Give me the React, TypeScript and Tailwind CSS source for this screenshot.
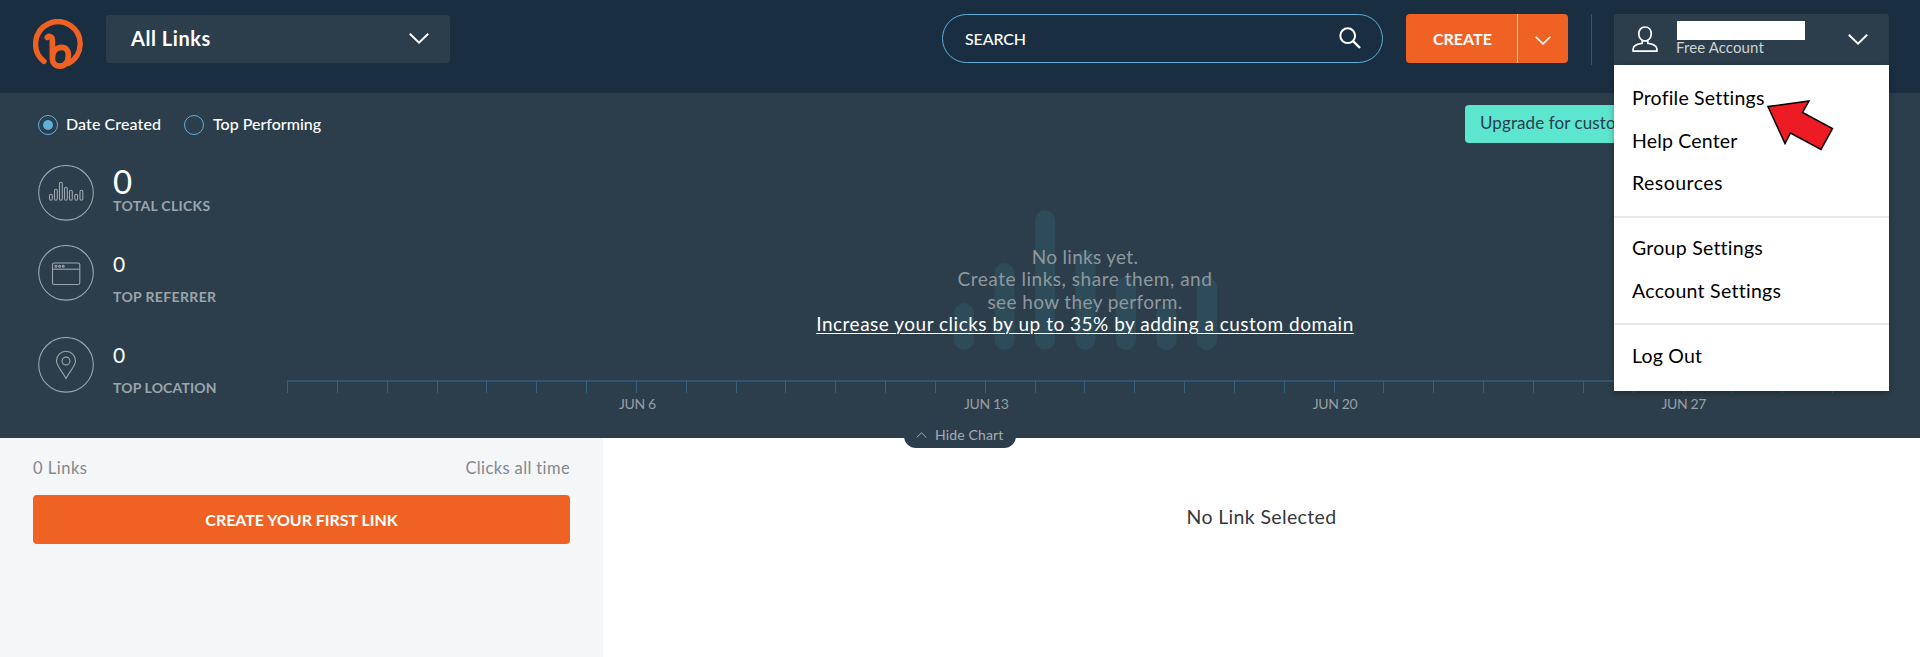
const tickSpacing = 49.84;
const ticks = Array.from({ length: 32 }, (_, i) => Math.round(i * tickSpacing) + 0.5);
const dates = ["JUN 6", "JUN 13", "JUN 20", "JUN 27"];
const bars = [
  { x: 667, top: 138 },
  { x: 707.5, top: 98 },
  { x: 748, top: 45 },
  { x: 788.5, top: 85 },
  { x: 829, top: 112 },
  { x: 869.5, top: 138 },
  { x: 910, top: 112 },
];
const glyphBars = [
  { x: 11.5, h: 6 },
  { x: 16.5, h: 11 },
  { x: 21.5, h: 18 },
  { x: 26.5, h: 13 },
  { x: 31.5, h: 10 },
  { x: 36.8, h: 6 },
  { x: 42, h: 10 },
];

function Logo() {
  return (
    <svg className="mt-[19px] h-[50px] w-[50px]" viewBox="0 0 50 50" fill="none" stroke="#ee6123" strokeLinecap="round">
      <path d="M11 42.4A22.3 22.3 0 1 1 47.2 25.5C47 33 43 40.5 35 44.5" strokeWidth="5.4" />
      <path d="M14.3 18.3C15.6 16.8 19.4 17 19.4 21.5V39.5C19.4 44 22.3 47.1 26.8 47.1C32.6 47.1 35.4 42 35.4 36C35.4 31 32.8 28.3 28.8 28.3C23.5 28.3 19.6 32 19.4 38.5" strokeWidth="5.7" />
    </svg>
  );
}

function Chevron({ className }: { className: string }) {
  return (
    <svg className={className} viewBox="0 0 20 11" fill="none" stroke="currentColor" strokeWidth="2">
      <path d="M0.8 0.8L10 9.6L19.2 0.8" />
    </svg>
  );
}

function Ring({ children }: { children: React.ReactNode }) {
  return (
    <svg className="h-14 w-14 shrink-0" viewBox="0 0 56 56" fill="none" stroke="#9ca5ab" strokeWidth="1.1">
      <circle cx="28" cy="27.8" r="27.3" />
      {children}
    </svg>
  );
}

function Header() {
  return (
    <header className="flex h-[93px] items-start bg-[#1a2e41] pl-[33px]">
      <Logo />
      <div className="mt-[15px] ml-[23px] flex h-12 w-[344px] items-center justify-between rounded-[3px] bg-[#2c3e4b] pr-[21px] pb-[2px] pl-[25px] text-white">
        <span className="text-[20px] font-bold tracking-[0.55px]">All Links</span>
        <Chevron className="h-[11px] w-5" />
      </div>
      <div className="mt-[14px] ml-[492px] flex h-[49px] w-[441px] items-center justify-between rounded-full border border-[#5eb0dc] pr-[21px] pl-[22px] text-white">
        <span className="text-base font-medium tracking-[-0.12px]">SEARCH</span>
        <svg className="-mt-[2px] h-[22px] w-[22px]" viewBox="0 0 22 22" fill="none" stroke="currentColor">
          <circle cx="8.7" cy="8.7" r="7.4" strokeWidth="2" />
          <path d="M14 14L21 21" strokeWidth="2.4" />
        </svg>
      </div>
      <div className="mt-[14px] ml-[23px] flex h-[49px] w-[162px] overflow-hidden rounded bg-[#f06223] text-white">
        <div className="flex w-[112px] items-center border-r border-[#fbd5c4] pl-[27px] text-base font-bold">CREATE</div>
        <div className="flex flex-1 items-center justify-center pt-[4px]">
          <Chevron className="h-[9px] w-4" />
        </div>
      </div>
      <div className="mt-[14px] ml-[23px] h-[51px] w-px bg-[#2f566e]" />
      <div className="relative mt-[14px] ml-[22px]">
        <div className="flex h-[51px] w-[275px] items-start rounded-t-[3px] bg-[#2c3e4b] pl-[18px] text-white">
          <svg className="mt-[12px] h-[27px] w-[26px]" viewBox="0 0 26 27" fill="none" stroke="currentColor" strokeWidth="1.7" strokeLinejoin="round">
            <path d="M10.2 14.2C7.8 12.8 6.8 10.5 6.8 7.8C6.8 3.8 9.3 1 13 1S19.2 3.8 19.2 7.8C19.2 10.5 18.2 12.8 15.8 14.2V17.3C20 18.2 24.9 18.8 24.9 23V25.2H1.1V23C1.1 18.8 6 18.2 10.2 17.3Z" />
            <path d="M10.2 14.2C12 15.2 14 15.2 15.8 14.2" />
          </svg>
          <div className="ml-[19px] w-[128px]">
            <div className="mt-[7px] h-[19px] bg-white" />
            <div className="-ml-px text-[15px] leading-[15px] tracking-[0.1px] text-[#cdd2d5]">Free Account</div>
          </div>
          <Chevron className="mt-[20px] ml-[43px] h-[11px] w-5" />
        </div>
        <AccountMenu />
      </div>
    </header>
  );
}

function AccountMenu() {
  return (
    <nav className="absolute top-[51px] left-0 z-20 h-[326px] w-[275px] bg-white text-[19.5px] leading-[42.5px] text-black shadow-[0_2px_6px_rgba(0,0,0,0.3)]">
      <ul className="h-[151px] pt-[12px] pl-[18px]">
        <li className="tracking-[0.2px]">Profile Settings</li>
        <li className="tracking-[0.18px]">Help Center</li>
        <li className="tracking-[0.45px]">Resources</li>
      </ul>
      <ul className="h-[107px] border-t-2 border-[#e9e9e9] pt-[9px] pl-[18px]">
        <li className="tracking-[0.25px]">Group Settings</li>
        <li className="tracking-[0.28px]">Account Settings</li>
      </ul>
      <ul className="border-t-2 border-[#e9e9e9] pt-[10px] pl-[18px]">
        <li className="tracking-[0.2px]">Log Out</li>
      </ul>
      <svg className="absolute top-[32px] left-[150px] h-[56px] w-[72px]" viewBox="0 0 72 56">
        <path d="M4 9.5L45 4L38.5 15.5L68.5 31.5L57 52.5L26.5 36L21 46.5Z" fill="#ed1c24" stroke="#000" strokeWidth="1.5" />
      </svg>
    </nav>
  );
}

function Stats() {
  return (
    <div className="w-[287px] pl-[38px] text-white">
      <div className="flex h-20 gap-[19px]">
        <Ring>
          {glyphBars.map((b) => (
            <rect key={b.x} x={b.x} y={35.2 - b.h} width="2.8" height={b.h} rx="1.4" />
          ))}
        </Ring>
        <div>
          <div className="text-[33px] leading-[32px]">0</div>
          <div className="text-sm leading-[17px] font-bold tracking-[0.32px] text-[#9ca5ab]">TOTAL CLICKS</div>
        </div>
      </div>
      <div className="flex h-[92px] gap-[19px]">
        <Ring>
          <rect x="14.5" y="18" width="27.3" height="21.5" rx="1.5" />
          <path d="M14.5 24.2H41.8" />
          <circle cx="18" cy="21.3" r="1" />
          <circle cx="21.6" cy="21.3" r="1" />
          <circle cx="25.2" cy="21.3" r="1" />
        </Ring>
        <div>
          <div className="text-[21px] leading-[38px]">0</div>
          <div className="text-sm leading-[27px] font-bold tracking-[0.36px] text-[#9ca5ab]">TOP REFERRER</div>
        </div>
      </div>
      <div className="flex gap-[19px]">
        <Ring>
          <path d="M28 41.5C25 35 18.5 29.5 18.5 23.8A9.5 9.5 0 0 1 37.5 23.8C37.5 29.5 31 35 28 41.5Z" />
          <circle cx="28" cy="24" r="3.9" />
        </Ring>
        <div>
          <div className="text-[21px] leading-[36px]">0</div>
          <div className="text-sm leading-[29px] font-bold tracking-[0.14px] text-[#9ca5ab]">TOP LOCATION</div>
        </div>
      </div>
    </div>
  );
}

function Chart() {
  return (
    <div className="relative h-[273px] w-[1596px]">
      <svg className="absolute inset-0 h-[273px] w-[1596px]" viewBox="0 0 1596 273">
        {bars.map((b) => (
          <rect key={b.x} x={b.x} y={b.top} width="20" height={185 - b.top} rx="10" fill="#2e4b59" />
        ))}
        <rect x="0" y="215" width="1596" height="2" fill="#2f566e" />
        {ticks.map((t) => (
          <path key={t} d={`M${t} 216V228`} stroke="#35617b" />
        ))}
      </svg>
      <div className="relative flex h-[229px] flex-col items-center pt-[81px] text-[19px] leading-[22.4px] text-[#8f989d]">
        <p className="tracking-[0.31px]">No links yet.</p>
        <p className="tracking-[0.53px]">Create links, share them, and</p>
        <p className="tracking-[0.39px]">see how they perform.</p>
        <a className="tracking-[0.5px] text-white underline decoration-1 underline-offset-2">
          Increase your clicks by up to 35% by adding a custom domain
        </a>
      </div>
      <div className="relative flex pl-[176px] text-center text-sm leading-[19px] tracking-[-0.35px] text-[#999fa3]">
        {dates.map((d) => (
          <span key={d} className="w-[348.8px]">{d}</span>
        ))}
      </div>
    </div>
  );
}

function ChartPanel() {
  return (
    <section className="relative h-[345px] bg-[#2c3e4b]">
      <div className="flex h-[72px] items-start pl-[38px] text-base leading-5 font-medium text-white">
        <span className="mt-[22px] flex h-5 w-5 items-center justify-center rounded-full border border-[#5eb0dc]">
          <span className="h-[10px] w-[10px] rounded-full bg-[#5eb0dc]" />
        </span>
        <span className="mt-[21px] ml-[8px] w-[118px] tracking-[0.1px]">Date Created</span>
        <span className="mt-[22px] h-5 w-5 rounded-full border border-[#5eb0dc]" />
        <span className="mt-[21px] ml-[9px]">Top Performing</span>
        <div className="mt-3 mr-[37px] ml-auto h-[38px] w-[418px] rounded bg-[#5ce5cf] pl-[15px] text-[17px] leading-[36px] font-normal tracking-[0.09px] text-[#2c3e4b]">
          Upgrade for custom
        </div>
      </div>
      <div className="flex">
        <Stats />
        <Chart />
      </div>
      <div className="absolute top-[331px] left-[904px] z-10 flex h-6 w-28 items-center rounded-b-xl bg-[#2c3e4b] pl-3 text-sm leading-[18px] tracking-[0.15px] text-[#a6adb1]">
        <svg className="-mt-[2px] mr-[8px] h-[6px] w-[11px]" viewBox="0 0 11 6" fill="none" stroke="currentColor">
          <path d="M0.7 5.5L5.5 0.8L10.3 5.5" />
        </svg>
        <span className="-mt-[2px]">Hide Chart</span>
      </div>
    </section>
  );
}

export default function App() {
  return (
    <div className="h-[657px] w-[1920px] overflow-hidden bg-white font-['Lato',sans-serif]">
      <Header />
      <ChartPanel />
      <main className="flex h-[219px]">
        <aside className="w-[603px] bg-[#f4f6f8] pt-[20px] pr-[33px] pl-[33px]">
          <div className="flex justify-between text-[16.5px] leading-5 text-[#84888c]">
            <span className="tracking-[0.5px]">0 Links</span>
            <span className="tracking-[0.38px]">Clicks all time</span>
          </div>
          <button className="mt-[17px] h-[49px] w-full rounded bg-[#f06223] text-base font-bold tracking-[-0.03px] text-white">
            CREATE YOUR FIRST LINK
          </button>
        </aside>
        <div className="flex-1 pt-[68px] text-center text-[19.5px] leading-[22px] tracking-[0.36px] text-[#36383c]">
          No Link Selected
        </div>
      </main>
    </div>
  );
}
